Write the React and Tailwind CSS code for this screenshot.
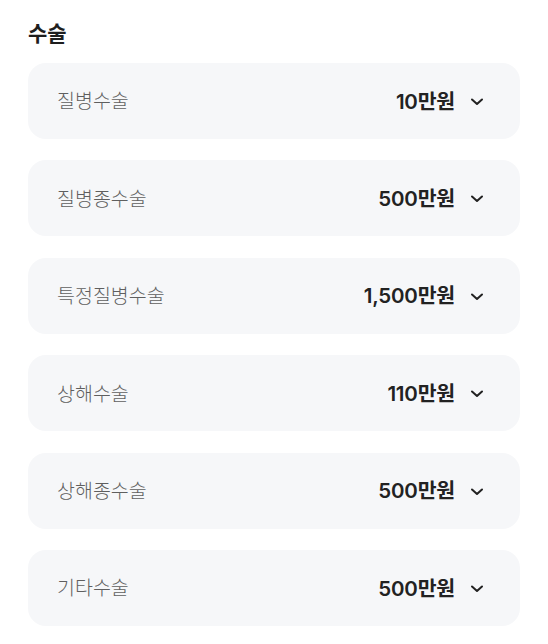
import React from 'react';

const items = [
  { label: '질병수술', value: '10만원' },
  { label: '질병종수술', value: '500만원' },
  { label: '특정질병수술', value: '1,500만원' },
  { label: '상해수술', value: '110만원' },
  { label: '상해종수술', value: '500만원' },
  { label: '기타수술', value: '500만원' },
];

function Chevron() {
  return (
    <svg width="16" height="16" viewBox="0 0 16 16" fill="none" stroke="#222" strokeWidth={2} strokeLinecap="round" strokeLinejoin="round">
      <path d="M3 5.5l5 4.5 5-4.5" />
    </svg>
  );
}

export default function App() {
  return (
    <div
      className="w-[548px] h-[644px] bg-white overflow-hidden px-[28px] pt-[20px]"
      style={{ fontFamily: 'Inter, "Noto Sans CJK KR", "Noto Sans", sans-serif' }}
    >
      <h2 className="text-[21px] font-bold text-[#1e1e1e] leading-[28px]">수술</h2>
      <div className="mt-[15px] flex flex-col gap-[21.4px]">
        {items.map((it) => (
          <div key={it.label} className="h-[76px] w-[492px] rounded-[18px] bg-[#f6f7f9] flex items-center justify-between pl-[29px] pr-[35px] pt-[2px]">
            <span className="text-[19.5px] font-light text-[#5f5f5f]">{it.label}</span>
            <div className="flex items-center gap-[14px]">
              <span className="text-[20.5px] font-semibold text-[#222] tracking-[-0.2px]">{it.value}</span>
              <Chevron />
            </div>
          </div>
        ))}
      </div>
    </div>
  );
}
